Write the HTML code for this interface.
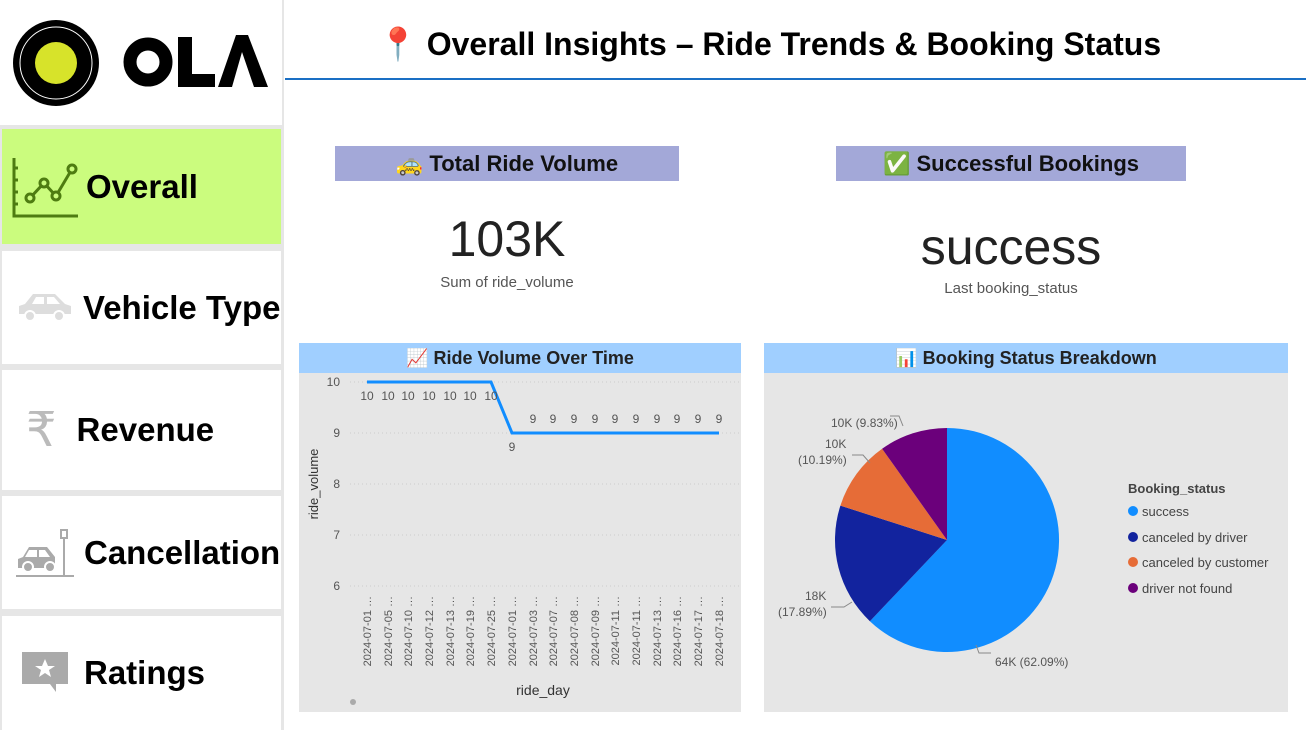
<!DOCTYPE html>
<html><head><meta charset="utf-8"><style>
*{margin:0;padding:0;box-sizing:border-box}
body{width:1306px;height:730px;background:#fff;position:relative;overflow:hidden;font-family:"Liberation Sans","DejaVu Sans",sans-serif}
.a{position:absolute}
.nav{position:absolute;left:2px;width:279px;background:#fff;display:flex;align-items:center}
.nav span{font-weight:bold;font-size:33px;color:#000}
.hd{position:absolute;background:#a3a8d8;font-weight:bold;font-size:22px;display:flex;align-items:center;justify-content:center;gap:8px;color:#111}
.ph{position:absolute;background:#a0cfff;font-weight:bold;font-size:18px;display:flex;align-items:center;justify-content:center;gap:8px;color:#222;height:30px}
</style></head><body>
<div class="a" style="left:0;top:0;width:284px;height:730px;background:#e6e6e6"></div>
<div class="a" style="left:0;top:0;width:282px;height:125px;background:#fff"></div>
<svg class="a" style="left:0;top:0" width="282" height="125">
<circle cx="56" cy="63" r="43" fill="#000"/>
<circle cx="56" cy="63" r="36" fill="none" stroke="#fff" stroke-width="1"/>
<circle cx="56" cy="63" r="21" fill="#d7e32a"/>
<circle cx="148" cy="62" r="18" fill="none" stroke="#000" stroke-width="13"/>
<path d="M178 37h14v37h23v13h-37z" fill="#000"/>
<path d="M218 87 L236 35 L248 35 L268 87 L254 87 L242 52 L232 87z" fill="#000"/>
</svg>
<div class="nav" style="top:129px;height:115px;background:#cbfc7e">
<svg style="margin-left:8px" width="68" height="66" viewBox="0 0 68 66"><path d="M4 4v58h64" fill="none" stroke="#4e7c11" stroke-width="3"/><path d="M4 14h4M4 26h4M4 38h4M4 50h4" stroke="#4e7c11" stroke-width="3"/><polyline points="20,44 34,29 46,42 62,15" fill="none" stroke="#4e7c11" stroke-width="3"/><g fill="#cbfc7e" stroke="#4e7c11" stroke-width="3"><circle cx="20" cy="44" r="4"/><circle cx="34" cy="29" r="4"/><circle cx="46" cy="42" r="4"/><circle cx="62" cy="15" r="4"/></g></svg>
<span style="margin-left:8px">Overall</span></div>
<div class="nav" style="top:251px;height:113px">
<svg style="margin-left:15px" width="56" height="32" viewBox="0 0 56 32"><path d="M2 22v-8l6-2 8-10h22l10 10 6 2v8z" fill="#ddd"/><path d="M19 5h8v7h-12zM30 5h7l6 7h-13z" fill="#fff"/><circle cx="13" cy="24" r="5" fill="#ddd" stroke="#fff" stroke-width="2"/><circle cx="42" cy="24" r="5" fill="#ddd" stroke="#fff" stroke-width="2"/></svg>
<span style="margin-left:10px">Vehicle Type</span></div>
<div class="nav" style="top:370px;height:120px">
<span style="margin-left:24px;color:#bbb;font-weight:normal;font-size:48px">₹</span>
<span style="margin-left:20px">Revenue</span></div>
<div class="nav" style="top:496px;height:113px">
<svg style="margin-left:14px" width="60" height="50" viewBox="0 0 60 50"><path d="M2 40v-9l5-2 6-10h18l8 10v11z" fill="#aaa"/><path d="M13 22h8v7h-12zM23 22h6l5 7h-11z" fill="#fff"/><circle cx="12" cy="39" r="5" fill="#aaa" stroke="#fff" stroke-width="2"/><circle cx="34" cy="39" r="5" fill="#aaa" stroke="#fff" stroke-width="2"/><path d="M48 48V10M45 2h6v8h-6z" stroke="#aaa" stroke-width="2" fill="none"/><path d="M0 48h58" stroke="#aaa" stroke-width="2"/></svg>
<span style="margin-left:8px">Cancellation</span></div>
<div class="nav" style="top:616px;height:114px">
<svg style="margin-left:20px" width="46" height="42" viewBox="0 0 46 42"><path d="M0 0h46v32h-12v8l-6-8H0z" fill="#aaa"/><path d="M23 7l3 7h7l-6 4 2 7-6-4-6 4 2-7-6-4h7z" fill="#fff"/></svg>
<span style="margin-left:16px">Ratings</span></div>
<div class="a" style="left:378px;top:25px;font-size:32px;font-weight:bold;letter-spacing:0px;color:#000;white-space:nowrap"><span style="color:#e8335a">📍</span> Overall Insights – Ride Trends &amp; Booking Status</div>
<div class="a" style="left:285px;top:78px;width:1021px;height:2px;background:#1a6fc4"></div>
<div class="hd" style="left:335px;top:146px;width:344px;height:35px">🚕 Total Ride Volume</div>
<div class="hd" style="left:836px;top:146px;width:350px;height:35px">✅ Successful Bookings</div>
<div class="a" style="left:335px;top:210px;width:344px;text-align:center;font-size:50px;color:#222">103K</div>
<div class="a" style="left:335px;top:274px;width:344px;text-align:center;font-size:15px;color:#555">Sum of ride_volume</div>
<div class="a" style="left:836px;top:218px;width:350px;text-align:center;font-size:50px;color:#222">success</div>
<div class="a" style="left:836px;top:280px;width:350px;text-align:center;font-size:15px;color:#555">Last booking_status</div>
<div class="a" style="left:299px;top:343px;width:442px;height:369px;background:#e6e6e6"></div>
<div class="ph" style="left:299px;top:343px;width:442px">📈 Ride Volume Over Time</div>
<svg class="a" style="left:0;top:0" width="1306" height="730">
<g stroke="#ccc" stroke-dasharray="1 3"><path d="M350 382h390M350 433h390M350 484h390M350 535h390M350 586h390"/></g>
<g font-size="12" fill="#555" text-anchor="end"><text x="340" y="386">10</text><text x="340" y="437">9</text><text x="340" y="488">8</text><text x="340" y="539">7</text><text x="340" y="590">6</text></g>
<text transform="translate(318 484) rotate(-90)" font-size="13" fill="#333" text-anchor="middle">ride_volume</text>
<polyline points="367,382 491,382 512,433 719,433" fill="none" stroke="#118dff" stroke-width="3"/>
<g font-size="12" fill="#555" text-anchor="middle">
<text x="367" y="400">10</text><text x="388" y="400">10</text><text x="408" y="400">10</text><text x="429" y="400">10</text><text x="450" y="400">10</text><text x="470" y="400">10</text><text x="491" y="400">10</text>
<text x="512" y="451">9</text>
<text x="533" y="423">9</text><text x="553" y="423">9</text><text x="574" y="423">9</text><text x="595" y="423">9</text><text x="615" y="423">9</text><text x="636" y="423">9</text><text x="657" y="423">9</text><text x="677" y="423">9</text><text x="698" y="423">9</text><text x="719" y="423">9</text>
</g>
<g font-size="11" fill="#555" text-anchor="end">
<text transform="translate(371 596) rotate(-90)">2024-07-01 …</text>
<text transform="translate(392 596) rotate(-90)">2024-07-05 …</text>
<text transform="translate(412 596) rotate(-90)">2024-07-10 …</text>
<text transform="translate(433 596) rotate(-90)">2024-07-12 …</text>
<text transform="translate(454 596) rotate(-90)">2024-07-13 …</text>
<text transform="translate(474 596) rotate(-90)">2024-07-19 …</text>
<text transform="translate(495 596) rotate(-90)">2024-07-25 …</text>
<text transform="translate(516 596) rotate(-90)">2024-07-01 …</text>
<text transform="translate(537 596) rotate(-90)">2024-07-03 …</text>
<text transform="translate(557 596) rotate(-90)">2024-07-07 …</text>
<text transform="translate(578 596) rotate(-90)">2024-07-08 …</text>
<text transform="translate(599 596) rotate(-90)">2024-07-09 …</text>
<text transform="translate(619 596) rotate(-90)">2024-07-11 …</text>
<text transform="translate(640 596) rotate(-90)">2024-07-11 …</text>
<text transform="translate(661 596) rotate(-90)">2024-07-13 …</text>
<text transform="translate(681 596) rotate(-90)">2024-07-16 …</text>
<text transform="translate(702 596) rotate(-90)">2024-07-17 …</text>
<text transform="translate(723 596) rotate(-90)">2024-07-18 …</text>
</g>
<text x="543" y="695" font-size="14" fill="#333" text-anchor="middle">ride_day</text>
<circle cx="353" cy="702" r="3" fill="#aaa"/>
</svg>
<div class="a" style="left:764px;top:343px;width:524px;height:369px;background:#e6e6e6"></div>
<div class="ph" style="left:764px;top:343px;width:524px">📊 Booking Status Breakdown</div>
<svg class="a" style="left:0;top:0" width="1306" height="730">
<path d="M947 540 L947 428 A112 112 0 1 1 869.9 621.2Z" fill="#118dff"/>
<path d="M947 540 L869.9 621.2 A112 112 0 0 1 840.4 505.6Z" fill="#12239e"/>
<path d="M947 540 L840.4 505.6 A112 112 0 0 1 882.1 448.7Z" fill="#e66c37"/>
<path d="M947 540 L882.1 448.7 A112 112 0 0 1 947 428Z" fill="#6b007b"/>
<g stroke="#888" fill="none"><path d="M903 426l-4-10h-9"/><path d="M870 463l-7-8h-11"/><path d="M852 602l-8 5h-13"/><path d="M976 645l3 8h12"/></g>
<g font-size="12" fill="#555"><text x="831" y="427">10K (9.83%)</text><text x="825" y="448">10K</text><text x="798" y="464">(10.19%)</text><text x="805" y="600">18K</text><text x="778" y="616">(17.89%)</text><text x="995" y="666">64K (62.09%)</text></g>
<text x="1128" y="493" font-size="13" font-weight="bold" fill="#444">Booking_status</text>
<g font-size="13" fill="#444"><circle cx="1133" cy="511" r="5" fill="#118dff"/><text x="1142" y="516">success</text>
<circle cx="1133" cy="537" r="5" fill="#12239e"/><text x="1142" y="542">canceled by driver</text>
<circle cx="1133" cy="562" r="5" fill="#e66c37"/><text x="1142" y="567">canceled by customer</text>
<circle cx="1133" cy="588" r="5" fill="#6b007b"/><text x="1142" y="593">driver not found</text></g>
</svg>
</body></html>
